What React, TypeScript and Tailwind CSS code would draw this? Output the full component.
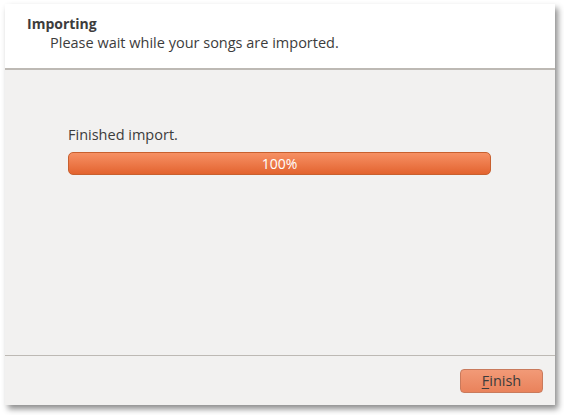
import React from 'react';

export default function App() {
  return (
    <div className="w-[564px] h-[415px] bg-white pt-[4px] pl-[5px]" style={{ fontFamily: '"Open Sans", "Noto Sans", sans-serif' }}>
      <div className="w-[550px] h-[401px] flex flex-col bg-[#f2f1f0] shadow-[3px_4px_6px_rgba(0,0,0,0.45)]">
        <div className="h-[66px] bg-white border-b-2 border-[#bdb9b4] pl-[22px] pt-[11px] text-[#3c3c3c]">
          <div className="text-[14px] font-bold leading-[18px]">Importing</div>
          <div className="pl-[23px] text-[14.5px] leading-[19px]">Please wait while your songs are imported.</div>
        </div>
        <div className="flex-1 flex flex-col px-[63px] pt-[55px] text-[#3c3c3c]">
          <div className="text-[14.5px] leading-[20px] mb-[7px]">Finished import.</div>
          <div className="h-[23px] w-[423px] rounded-[5px] border border-[#c8602f] bg-gradient-to-b from-[#f69063] to-[#e3632e] flex items-center justify-center text-white text-[14px]">
            100%
          </div>
        </div>
        <div className="h-[50px] border-t border-[#bdb9b4] flex items-center justify-end pr-[12px] pt-[1px]">
          <button className="w-[83px] h-[24px] rounded-[4px] border border-[#c97a5c] bg-gradient-to-b from-[#f29a77] to-[#e9825b] text-[#3c3c3c] text-[14.5px] leading-none">
            <span className="underline underline-offset-2">F</span>inish
          </button>
        </div>
      </div>
    </div>
  );
}
